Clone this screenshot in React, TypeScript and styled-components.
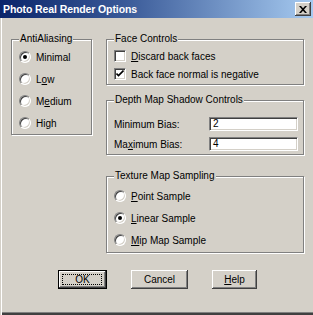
import React from "react";
import styled, { createGlobalStyle } from "styled-components";

const Global = createGlobalStyle`
  html, body { margin: 0; padding: 0; background: #d4d0c8; }
  * { box-sizing: border-box; }
`;

const Window = styled.div`
  width: 313px;
  height: 315px;
  background: #d4d0c8;
  font-family: "Liberation Sans", Arial, sans-serif;
  font-size: 10px;
  color: #000;
  box-shadow: inset 1px 0 0 #d4d0c8, inset 2px 0 0 #fff, inset 0 -2px 0 #404040, inset 0 -3px 0 #808080;
  display: flex;
  flex-direction: column;
`;

const TitleBar = styled.div`
  height: 18px;
  background: linear-gradient(to right, #0a246a 0%, #3a5a98 40%, #a6caf0 100%);
  display: flex;
  align-items: center;
  justify-content: space-between;
  padding: 0 2px 0 3px;
`;

const Title = styled.div`
  color: #fff;
  font-weight: bold;
  font-size: 10.5px;
  letter-spacing: -0.1px;
`;

const CloseButton = styled.div`
  width: 16px;
  height: 14px;
  background: #d4d0c8;
  box-shadow: inset -1px -1px 0 #404040, inset 1px 1px 0 #fff, inset -2px -2px 0 #808080;
  display: flex;
  align-items: center;
  justify-content: center;
`;

const Body = styled.div`
  padding: 21px 0 0 11px;
  display: grid;
  grid-template-columns: 81px 198px;
  column-gap: 14px;
  align-items: start;
`;

const RightColumn = styled.div`
  display: flex;
  flex-direction: column;
`;

const Group = styled.div<{ $h: number; $mt?: number; $pt: number }>`
  position: relative;
  height: ${(p) => p.$h}px;
  margin-top: ${(p) => p.$mt || 0}px;
  padding: ${(p) => p.$pt}px 0 0 7px;
  border: 1px solid #808080;
  box-shadow: 1px 1px 0 #fff, inset 1px 1px 0 #fff;
`;

const Legend = styled.span`
  position: absolute;
  top: -7px;
  left: 7px;
  padding: 0 1px;
  background: #d4d0c8;
  line-height: 12px;
  white-space: nowrap;
`;

const OptionRow = styled.div<{ $h: number }>`
  height: ${(p) => p.$h}px;
  display: flex;
  align-items: center;
  gap: 5px;
  white-space: nowrap;
`;

const Radio = styled.span<{ $on?: boolean }>`
  position: relative;
  width: 12px;
  height: 12px;
  flex: none;
  border-radius: 50%;
  background: #fff;
  border: 1px solid;
  border-color: #808080 #fff #fff #808080;
  box-shadow: inset 1px 1px 0 #404040, inset -1px -1px 0 #d4d0c8;
  &::after {
    content: "";
    display: ${(p) => (p.$on ? "block" : "none")};
    position: absolute;
    left: 3px;
    top: 3px;
    width: 4px;
    height: 4px;
    border-radius: 50%;
    background: #000;
  }
`;

const Check = styled.span`
  width: 12px;
  height: 12px;
  flex: none;
  background: #fff;
  border: 1px solid;
  border-color: #808080 #fff #fff #808080;
  box-shadow: inset 1px 1px 0 #404040, inset -1px -1px 0 #d4d0c8;
  display: flex;
  align-items: center;
  justify-content: center;
`;

const FieldRow = styled.div`
  height: 20px;
  display: grid;
  grid-template-columns: 95px 89px;
  align-items: center;
`;

const Field = styled.div`
  height: 14px;
  background: #fff;
  border: 1px solid;
  border-color: #808080 #fff #fff #808080;
  box-shadow: inset 1px 1px 0 #404040, inset -1px -1px 0 #d4d0c8;
  padding: 0 0 0 3px;
  line-height: 12px;
`;

const ButtonRow = styled.div`
  display: flex;
  gap: 24px;
  padding: 17px 0 0 58px;
`;

const Button = styled.div<{ $w: number; $default?: boolean }>`
  position: relative;
  width: ${(p) => p.$w}px;
  height: 19px;
  display: flex;
  align-items: center;
  justify-content: center;
  background: #d4d0c8;
  border: ${(p) => (p.$default ? "1px solid #000" : "none")};
  box-shadow: inset -1px -1px 0 #404040, inset 1px 1px 0 #fff, inset -2px -2px 0 #808080;
`;

const Focus = styled.span`
  position: absolute;
  inset: 3px 4px 3px 3px;
  border: 1px dotted #000;
`;

const Radios = (props: { items: [React.ReactNode, boolean][]; h: number }) => (
  <>
    {props.items.map(([label, on], i) => (
      <OptionRow key={i} $h={props.h}>
        <Radio $on={on} />
        <span>{label}</span>
      </OptionRow>
    ))}
  </>
);

export default function App() {
  return (
    <>
      <Global />
      <Window>
        <TitleBar>
          <Title>Photo Real Render Options</Title>
          <CloseButton>
            <svg width="8" height="7" viewBox="0 0 8 7">
              <path d="M0 0h2l2 2.3L6 0h2L5 3.5 8 7H6L4 4.7 2 7H0l3-3.5z" fill="#000" />
            </svg>
          </CloseButton>
        </TitleBar>
        <Body>
          <Group $h={96} $pt={6}>
            <Legend>AntiAliasing</Legend>
            <Radios
              h={22}
              items={[
                ["Minimal", true],
                [<>L<u>o</u>w</>, false],
                [<>M<u>e</u>dium</>, false],
                ["High", false],
              ]}
            />
          </Group>
          <RightColumn>
            <Group $h={46} $pt={7}>
              <Legend>Face Controls</Legend>
              <OptionRow $h={18}>
                <Check />
                <span>
                  <u>D</u>iscard back faces
                </span>
              </OptionRow>
              <OptionRow $h={18}>
                <Check>
                  <svg width="8" height="8" viewBox="0 0 8 8">
                    <path d="M0.5 3.5l2 2 5-5" stroke="#000" strokeWidth="1.6" fill="none" />
                  </svg>
                </Check>
                <span>Back face normal is negative</span>
              </OptionRow>
            </Group>
            <Group $h={55} $mt={15} $pt={13}>
              <Legend>Depth Map Shadow Controls</Legend>
              <FieldRow>
                <span>Minimum Bias:</span>
                <Field>2</Field>
              </FieldRow>
              <FieldRow>
                <span>
                  Ma<u>x</u>imum Bias:
                </span>
                <Field>4</Field>
              </FieldRow>
            </Group>
            <Group $h={77} $mt={21} $pt={8}>
              <Legend>Texture Map Sampling</Legend>
              <Radios
                h={22}
                items={[
                  [<><u>P</u>oint Sample</>, false],
                  [<><u>L</u>inear Sample</>, true],
                  [<><u>M</u>ip Map Sample</>, false],
                ]}
              />
            </Group>
          </RightColumn>
        </Body>
        <ButtonRow>
          <Button $w={49} $default>
            <Focus />
            OK
          </Button>
          <Button $w={57}>Cancel</Button>
          <Button $w={45}>
            <u>H</u>elp
          </Button>
        </ButtonRow>
      </Window>
    </>
  );
}
